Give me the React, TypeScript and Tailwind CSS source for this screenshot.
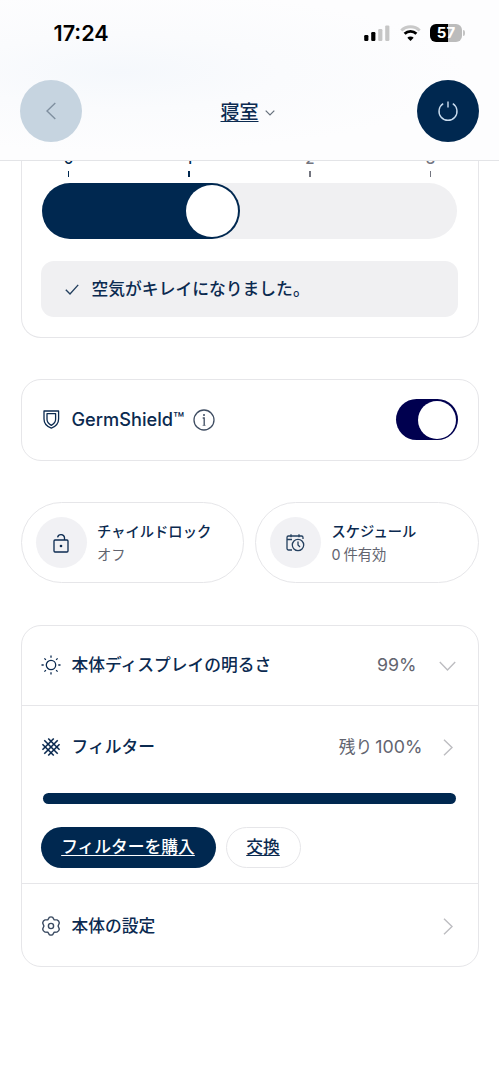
import type { ReactNode } from 'react'

const scale = [
  { value: 0, active: true },
  { value: 1, active: true },
  { value: 2, active: false },
  { value: 3, active: false },
]

function StatusBar() {
  return (
    <div className="flex h-[66px] items-center justify-between pr-[34px] pl-[53.5px]">
      <span className="text-[21.6px] leading-6 font-semibold text-black">17:24</span>
      <div className="flex items-center">
        <svg className="h-4 w-[26px]" viewBox="0 0 26 16">
          <rect x="0.2" y="10" width="4.2" height="6" rx="1.2" fill="#000" />
          <rect x="7.2" y="7" width="4.2" height="9" rx="1.2" fill="#000" />
          <rect x="14.2" y="4" width="4.2" height="12" rx="1.2" fill="#c6c6c6" />
          <rect x="21.2" y="0.4" width="4.2" height="15.6" rx="1.2" fill="#c6c6c6" />
        </svg>
        <svg className="ml-[10px] h-4 w-[21px]" viewBox="0 0 21 16" fill="none">
          <path d="M1.3 5.5a13.1 13.1 0 0 1 18.4 0" stroke="#c9c9c9" strokeWidth="2.8" />
          <path d="M4.6 8.8a8.5 8.5 0 0 1 11.8 0" stroke="#000" strokeWidth="2.8" />
          <path d="M10.5 16l-3.2-3.3a4.6 4.6 0 0 1 6.4 0z" fill="#000" />
        </svg>
        <div className="ml-[9px] flex h-[18px] w-[32px] items-center justify-center rounded-[6px] bg-[linear-gradient(to_right,#000_56%,#bcbcbc_56%)] text-[15px] font-bold text-white">
          57
        </div>
        <div className="ml-px h-[6px] w-[2px] rounded-r-full bg-[#c4c4c4]" />
      </div>
    </div>
  )
}

function Header() {
  return (
    <header className="h-[161px] border-b border-[#e3e4e7] bg-[radial-gradient(ellipse_at_24%_45%,#f5f8fc_0%,#fafbfd_30%,#fdfdfe_65%)]">
      <StatusBar />
      <div className="flex items-center justify-between px-[20px] pt-[14px]">
        <button className="flex size-[62px] items-center justify-center rounded-full bg-[#c6d4e0]">
          <svg className="mr-[1px] h-[18px] w-[10px]" viewBox="0 0 10 18" fill="none" stroke="#7f8f9f" strokeWidth="1.4">
            <path d="M9.3 1L1 9l8.3 8" />
          </svg>
        </button>
        <button className="mr-[4px] flex items-center pt-[3px] text-[19px] leading-7 font-medium">
          <span className="underline decoration-[1.3px] underline-offset-[2px]">寝室</span>
          <svg className="ml-[6px] h-[6px] w-[10px]" viewBox="0 0 10 6" fill="none" stroke="#66707c" strokeWidth="1.2">
            <path d="M.7.7L5 5 9.3.7" />
          </svg>
        </button>
        <button className="flex size-[62px] items-center justify-center rounded-full bg-[#002850]">
          <svg className="h-[22px] w-[22px]" viewBox="0 0 22 22" fill="none" stroke="#c9dcee" strokeWidth="1.4">
            <path d="M6.2 3.7a9 9 0 1 0 9.6 0M11 1.5v6" />
          </svg>
        </button>
      </div>
    </header>
  )
}

function AirQualityCard() {
  return (
    <section className="h-[177px] overflow-hidden rounded-b-[20px] border border-t-0 border-[#e6e6e9] px-[20px]">
      <div className="-mt-[12px] flex h-[34px] justify-between px-[17px]">
        {scale.map(({ value, active }) => (
          <div
            key={value}
            className={
              active
                ? 'flex w-5 flex-col items-center text-[15px] font-medium text-[#002850]'
                : 'flex w-5 flex-col items-center text-[15px] font-medium text-[#73757f]'
            }
          >
            <span className="h-[22px] leading-[20px]">{value}</span>
            <span className="h-[6px] w-[1.5px] bg-current" />
          </div>
        ))}
      </div>
      <div className="h-[56px] w-[415px] rounded-full bg-[#f0f0f2]">
        <div className="flex h-full w-[198.5px] items-center justify-end rounded-full bg-[#002850] pr-[2px]">
          <div className="size-[52px] rounded-full bg-white" />
        </div>
      </div>
      <div className="-ml-[1px] mt-[22px] flex h-[56px] items-center rounded-[13px] bg-[#f0f0f2] pl-[24px] text-[16.8px] font-medium">
        <svg className="mr-[13px] h-[11px] w-[14px]" viewBox="0 0 14 11" fill="none" stroke="#24405f" strokeWidth="1.4">
          <path d="M.8 5.7l4.2 4.2L13.2.9" />
        </svg>
        <span className="pt-[2px]">空気がキレイになりました。</span>
      </div>
    </section>
  )
}

function ShieldIcon() {
  return (
    <svg className="h-[19px] w-[17px]" viewBox="0 0 17 19" fill="none" stroke="currentColor" strokeWidth="1.3" strokeLinejoin="round">
      <path d="M1 1h14.6v8c0 4.4-2.4 7.3-7.3 9.2C3.4 16.3 1 13.4 1 9z" />
      <path d="M4 3.7h8.600v5.600c0 2.700-1.300 4.500-4.300 6C5.300 13.800 4 12 4 9.300z" />
    </svg>
  )
}

function InfoIcon() {
  return (
    <svg className="h-[22px] w-[22px]" viewBox="0 0 22 22" fill="none" stroke="#3f4d62" strokeWidth="1.3">
      <circle cx="11" cy="11" r="10" />
      <path d="M9.700 9h1.500v7.500" />
      <path d="M9.600 16.400h3" strokeWidth=".6" />
      <circle cx="11" cy="5.900" r="1" fill="#3f4d62" stroke="none" />
    </svg>
  )
}

function LockIcon() {
  return (
    <svg className="h-[20px] w-[16px]" viewBox="0 0 16 20" fill="none" stroke="currentColor" strokeWidth="1.3">
      <rect x="1" y="7" width="14" height="12" rx="1" />
      <path d="M4.600 4.400a3.500 3.500 0 0 1 6.900.3V7" />
      <circle cx="8" cy="13" r="1.300" fill="currentColor" stroke="none" />
    </svg>
  )
}

function ScheduleIcon() {
  return (
    <svg className="h-[18px] w-[19px]" viewBox="0 0 19 18" fill="none" stroke="#24405f" strokeWidth="1.3">
      <path d="M6 16H2.500A1.500 1.500 0 0 1 1 14.500v-11A1.500 1.500 0 0 1 2.500 2h13A1.500 1.500 0 0 1 17 3.500V5M1 5.500h5M5 .300v3M13 .300v3" />
      <circle cx="12" cy="11" r="5.700" />
      <path d="M12 7.500V11l2 2" />
    </svg>
  )
}

function SunIcon() {
  return (
    <svg className="size-5" viewBox="0 0 20 20" fill="none" stroke="currentColor" strokeWidth="1.3">
      <circle cx="10" cy="10" r="4.700" />
      <path d="M10 .500v2.200M10 17.300v2.200M.500 10h2.200M17.300 10h2.200M3.400 3.400l1.500 1.500M15.100 15.100l1.500 1.500M3.400 16.600l1.500-1.500M15.100 4.900l1.500-1.500" />
    </svg>
  )
}

function FilterIcon() {
  return (
    <svg className="size-5" viewBox="0 0 20 20" fill="none" stroke="currentColor" strokeWidth="1.6">
      <g transform="rotate(45 10 10)">
        <path d="M5.900 2v16M10 .500v19M14.100 2v16" />
        <path d="M2 5.900h16M.500 10h19M2 14.100h16" />
      </g>
    </svg>
  )
}

function GearIcon() {
  return (
    <svg className="size-5" viewBox="0 0 20 20" fill="none" stroke="#3b4b62" strokeWidth="1.4" strokeLinejoin="round">
      <path d="M8.300 1.400Q10 .3 11.700 1.400L13.200 3.800 16 3.900Q18 4.700 18.300 6.900L17.100 10l1.200 3.100Q18 15.300 16 16.100L13.200 16.200 11.700 18.600Q10 19.700 8.300 18.600L6.800 16.200 4 16.100Q2 15.300 1.700 13.100L2.900 10 1.700 6.900Q2 4.700 4 3.900L6.800 3.800z" />
      <circle cx="10" cy="10" r="2.600" />
    </svg>
  )
}

function ChevronRight() {
  return (
    <svg className="mr-[5px] h-[17px] w-[10px]" viewBox="0 0 10 17" fill="none" stroke="#bdbdc1" strokeWidth="1.4">
      <path d="M1 .8l8 7.700-8 7.700" />
    </svg>
  )
}

function ChevronDown() {
  return (
    <svg className="mt-px mr-[2px] h-[10px] w-[17px]" viewBox="0 0 17 10" fill="none" stroke="#bdbdc1" strokeWidth="1.4">
      <path d="M.8 1l7.700 8 7.700-8" />
    </svg>
  )
}

function QuickCard({ icon, title, children }: { icon: ReactNode; title: string; children: ReactNode }) {
  return (
    <button className="flex h-[81px] items-center rounded-full border border-[#e6e6e9] pl-[14px] text-left">
      <span className="flex size-[51px] items-center justify-center rounded-full bg-[#f1f1f4]">{icon}</span>
      <span className="ml-[10.5px] flex flex-col text-[14.3px] leading-[23px] font-medium">
        <span>{title}</span>
        <span className="font-normal text-[#62646f]">{children}</span>
      </span>
    </button>
  )
}

interface SettingRowProps {
  icon: ReactNode
  label: string
  children: ReactNode
}

function SettingRow({ icon, label, children }: SettingRowProps) {
  return (
    <div className="flex h-[26px] items-center justify-between">
      <div className="-ml-[1px] flex items-center gap-[11px] font-medium">
        {icon}
        <span className="pt-[2px]">{label}</span>
      </div>
      <div className="flex items-center text-[#62646f]">{children}</div>
    </div>
  )
}

export default function App() {
  return (
    <div className="h-[1080px] overflow-hidden bg-white font-[Inter,'Noto_Sans_CJK_JP',sans-serif] text-[16.75px] text-[#0b2a50]">
      <Header />
      <main className="px-[20.5px]">
        <AirQualityCard />

        <section className="mt-[41px] flex h-[82px] items-center justify-between rounded-[20px] border border-[#e6e6e9] pr-[20px] pl-[21px]">
          <div className="flex items-center">
            <ShieldIcon />
            <span className="ml-[12px] text-[18.2px] font-medium">GermShield™</span>
            <span className="ml-[9px]">
              <InfoIcon />
            </span>
          </div>
          <button className="mb-px flex h-[41px] w-[62px] items-center justify-end rounded-full bg-[#00004f] pr-[1.5px]">
            <span className="size-[38px] rounded-full bg-white" />
          </button>
        </section>

        <div className="mt-[41px] grid grid-cols-2 gap-[11px]">
          <QuickCard icon={<LockIcon />} title="チャイルドロック">
            オフ
          </QuickCard>
          <QuickCard icon={<ScheduleIcon />} title="スケジュール">
            <span className="mr-[3px]">0</span>件有効
          </QuickCard>
        </div>

        <section className="mt-[42px] h-[342px] divide-y divide-[#e6e6e9] rounded-[20px] border border-[#e6e6e9]">
          <div className="h-[80px] px-[20px] pt-[26px]">
            <SettingRow icon={<SunIcon />} label="本体ディスプレイの明るさ">
              <span className="mr-[22px] pt-px text-[17.8px]">99%</span>
              <ChevronDown />
            </SettingRow>
          </div>
          <div className="h-[178px] px-[20px] pt-[28px]">
            <SettingRow icon={<FilterIcon />} label="フィルター">
              <span className="pt-[2px]">残り</span>
              <span className="mr-[20px] ml-[3px] pt-px text-[17.8px]">100%</span>
              <ChevronRight />
            </SettingRow>
            <div className="mt-[33px] mr-[1.5px] ml-[1px] h-[11px] rounded-full bg-[#002850]" />
            <div className="mt-[22.5px] -ml-[1px] flex gap-[10px] font-medium">
              <button className="h-[41px] w-[175px] rounded-full bg-[#002850] pt-[2px] text-white underline decoration-[1px] underline-offset-[2px]">
                フィルターを購入
              </button>
              <button className="h-[41px] w-[75px] rounded-full border border-[#e6e6e9] pt-[2px] underline decoration-[1px] underline-offset-[2px]">
                交換
              </button>
            </div>
          </div>
          <div className="px-[20px] pt-[29px]">
            <SettingRow icon={<GearIcon />} label="本体の設定">
              <ChevronRight />
            </SettingRow>
          </div>
        </section>
      </main>
    </div>
  )
}
